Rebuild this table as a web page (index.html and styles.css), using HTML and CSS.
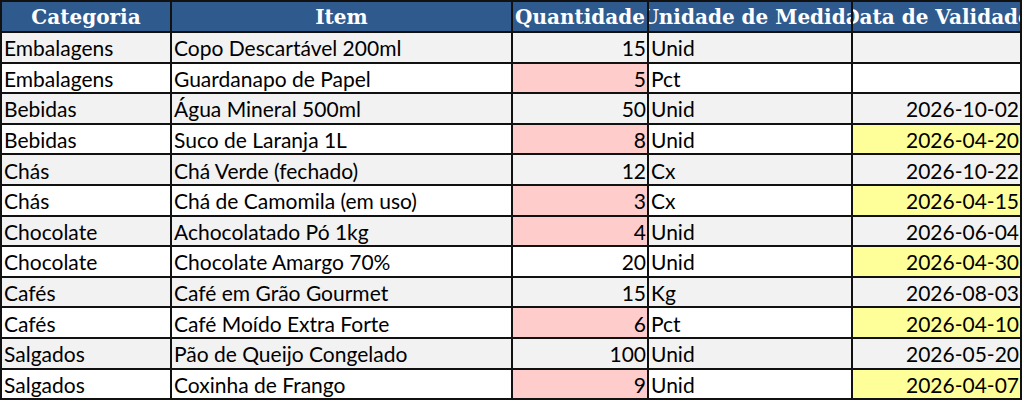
FILE: index.html
```html
<!DOCTYPE html>
<html lang="pt">
<head>
<meta charset="utf-8">
<title>Estoque</title>
<link rel="stylesheet" href="styles.css">
</head>
<body>
<div class="sheet">
  <div class="h">Categoria</div><div class="h">Item</div><div class="h">Quantidade</div><div class="h">Unidade de Medida</div><div class="h">Data de Validade</div>

  <div class="c g">Embalagens</div><div class="c g">Copo Descartável 200ml</div><div class="c g n">15</div><div class="c g">Unid</div><div class="c g n"></div>
  <div class="c">Embalagens</div><div class="c">Guardanapo de Papel</div><div class="c n low">5</div><div class="c">Pct</div><div class="c n"></div>
  <div class="c g">Bebidas</div><div class="c g">Água Mineral 500ml</div><div class="c g n">50</div><div class="c g">Unid</div><div class="c g n">2026-10-02</div>
  <div class="c">Bebidas</div><div class="c">Suco de Laranja 1L</div><div class="c n low">8</div><div class="c">Unid</div><div class="c n exp">2026-04-20</div>
  <div class="c g">Chás</div><div class="c g">Chá Verde (fechado)</div><div class="c g n">12</div><div class="c g">Cx</div><div class="c g n">2026-10-22</div>
  <div class="c">Chás</div><div class="c">Chá de Camomila (em uso)</div><div class="c n low">3</div><div class="c">Cx</div><div class="c n exp">2026-04-15</div>
  <div class="c g">Chocolate</div><div class="c g">Achocolatado Pó 1kg</div><div class="c g n low">4</div><div class="c g">Unid</div><div class="c g n">2026-06-04</div>
  <div class="c">Chocolate</div><div class="c">Chocolate Amargo 70%</div><div class="c n">20</div><div class="c">Unid</div><div class="c n exp">2026-04-30</div>
  <div class="c g">Cafés</div><div class="c g">Café em Grão Gourmet</div><div class="c g n">15</div><div class="c g">Kg</div><div class="c g n">2026-08-03</div>
  <div class="c">Cafés</div><div class="c">Café Moído Extra Forte</div><div class="c n low">6</div><div class="c">Pct</div><div class="c n exp">2026-04-10</div>
  <div class="c g">Salgados</div><div class="c g">Pão de Queijo Congelado</div><div class="c g n">100</div><div class="c g">Unid</div><div class="c g n">2026-05-20</div>
  <div class="c">Salgados</div><div class="c">Coxinha de Frango</div><div class="c n low">9</div><div class="c">Unid</div><div class="c n exp">2026-04-07</div>
</div>
</body>
</html>
```

FILE: styles.css
```css
html, body {
  margin: 0;
  padding: 0;
  background: #ffffff;
}

.sheet {
  display: grid;
  grid-template-columns: 168px 339px 134px 202px 167px;
  grid-template-rows: 29px repeat(12, 28.6px);
  gap: 2px;
  padding: 2px;
  width: max-content;
  background: #111111;
}

.h {
  background: #2f5a8e;
  color: #ffffff;
  font-family: "DejaVu Serif", "Liberation Serif", serif;
  font-weight: bold;
  font-size: 20px;
  display: flex;
  align-items: center;
  justify-content: center;
  white-space: nowrap;
  overflow: hidden;
}

.c {
  background: #ffffff;
  color: #000000;
  font-family: Lato, "Open Sans", sans-serif;
  font-size: 21px;
  display: flex;
  align-items: center;
  padding: 1px 2px 0;
  white-space: nowrap;
  overflow: hidden;
}

.c.g {
  background: #f2f2f2;
}

.c.n {
  justify-content: flex-end;
  padding: 1px 1px 0;
}

.c.low {
  background: #ffcccc;
}

.c.exp {
  background: #ffff99;
}
```
